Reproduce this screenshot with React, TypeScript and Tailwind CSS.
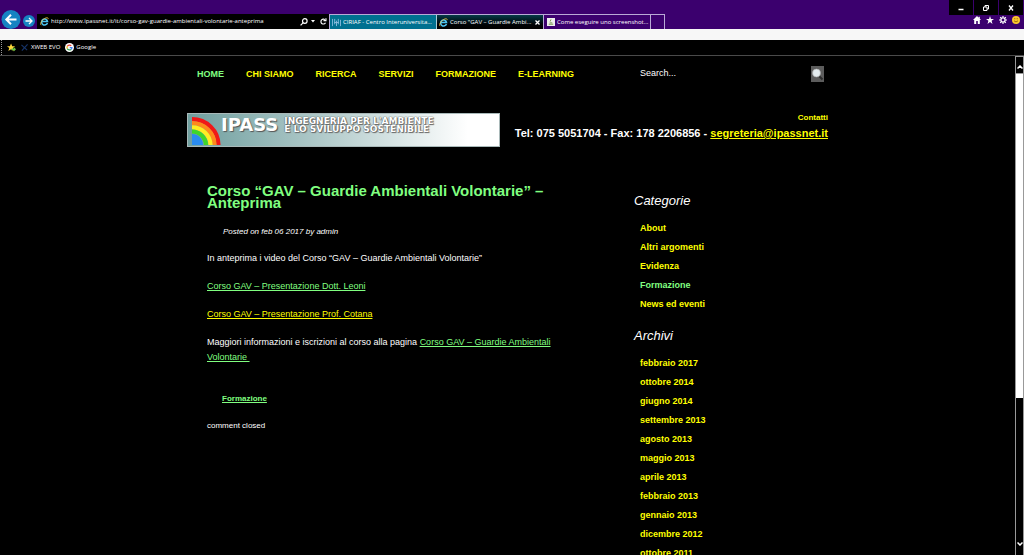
import type { ReactNode } from "react";

const nav = ["HOME", "CHI SIAMO", "RICERCA", "SERVIZI", "FORMAZIONE", "E-LEARNING"];
const categories = ["About", "Altri argomenti", "Evidenza", "Formazione", "News ed eventi"];
const archives = [
  "febbraio 2017",
  "ottobre 2014",
  "giugno 2014",
  "settembre 2013",
  "agosto 2013",
  "maggio 2013",
  "aprile 2013",
  "febbraio 2013",
  "gennaio 2013",
  "dicembre 2012",
  "ottobre 2011",
];

function IeIcon() {
  return (
    <svg viewBox="0 0 16 16" className="size-[9px] shrink-0" aria-hidden="true">
      <path d="M13.2 10.500A5.300 5.300 0 1 1 13.400 8H4" fill="none" stroke="#4cc3f0" strokeWidth="2.800" />
      <path d="M2 14.500C-1 12 4 4 10 1.800c3-1.200 5-.6 4.300 2" fill="none" stroke="#f3c33c" strokeWidth="1.500" />
    </svg>
  );
}

function WindowButton({ label, children }: { label: string; children: ReactNode }) {
  return (
    <button aria-label={label} className="flex h-[15px] w-6 items-center justify-center bg-black">
      <svg viewBox="0 0 8 8" className="size-2" fill="none" stroke="#fff" strokeWidth="1">
        {children}
      </svg>
    </button>
  );
}

function AddressBar() {
  return (
    <div className="flex items-end">
      <button aria-label="Indietro" className="ml-px shrink-0">
        <svg viewBox="0 0 20 20" className="size-5">
          <circle cx="10" cy="10.500" r="9.500" fill="#1683c2" />
          <path d="M15.500 10.500H5.500M10 5.800 5.300 10.500 10 15.200" fill="none" stroke="#fff" strokeWidth="2" />
        </svg>
      </button>
      <button aria-label="Avanti" className="mb-[2px] ml-[2px] shrink-0">
        <svg viewBox="0 0 12 12" className="size-3">
          <circle cx="6" cy="6" r="6" fill="#1683c2" />
          <path d="M2.500 6H9M6 3l3 3-3 3" fill="none" stroke="#fff" strokeWidth="1.300" />
        </svg>
      </button>
      <div className="ml-[2px] flex h-[15px] w-[292px] items-center bg-black pl-[3px]">
        <IeIcon />
        <input
          aria-label="Indirizzo"
          defaultValue="http://www.ipassnet.it/it/corso-gav-guardie-ambientali-volontarie-anteprima"
          className="ml-[2px] min-w-0 flex-1 bg-transparent text-[6px] text-white outline-none"
        />
        <button aria-label="Cerca" className="flex items-center gap-[3px]">
          <svg viewBox="0 0 8 8" className="size-2" fill="none" stroke="#fff" strokeWidth="1.200">
            <circle cx="4.800" cy="3" r="2.300" />
            <path d="M3.200 4.700.6 7.400" />
          </svg>
          <svg viewBox="0 0 4 3" className="h-[3px] w-1" fill="#fff">
            <path d="M0 0h4L2 2.500z" />
          </svg>
        </button>
        <button aria-label="Aggiorna" className="mr-[2px] ml-[5px]">
          <svg viewBox="0 0 8 8" className="size-[7px]" fill="none" stroke="#fff" strokeWidth="1.300">
            <path d="M6.300 5.500A2.800 2.800 0 1 1 5.600 1.900" />
            <path d="M4 3h2.800V.3" />
          </svg>
        </button>
      </div>
    </div>
  );
}

function Tabs() {
  return (
    <div className="flex h-[15px] border-t border-l border-[#b9a9d6] text-[6px] text-white">
      <button className="flex w-[107px] items-center gap-[2px] border-r border-[#a8cbd6] bg-[#007090] pl-[2px]">
        <svg viewBox="0 0 10 10" className="size-[9px]" fill="none" stroke="#8cc0e0">
          <path d="M.5 1v8M2.500 5h5M3 1v6M5 3v6M7 1v6M9.500 2v7" />
        </svg>
        CIRIAF - Centro Interuniversita...
      </button>
      <div className="flex w-[107px] items-center border-r border-[#b9a9d6] bg-linear-to-b from-[#063b49] to-black pl-[2px]">
        <IeIcon />
        <button className="ml-[2px] flex-1 text-left">Corso "GAV – Guardie Ambi...</button>
        <button aria-label="Chiudi scheda" className="mr-[3px]">
          <svg viewBox="0 0 5 5" className="size-[5px]" stroke="#fff" strokeWidth="1.300">
            <path d="m.5.5 4 4m0-4-4 4" />
          </svg>
        </button>
      </div>
      <button className="flex w-[107px] items-center gap-[2px] border-r border-[#b9a9d6] pl-[3px]">
        <svg viewBox="0 0 9 9" className="size-2">
          <path d="M0 0h9v9H0z" fill="#eee" />
          <path d="M2 7h5M3 5.500h3M4.500 1.500 3.500 4" stroke="#6a8f3c" fill="none" />
        </svg>
        Come eseguire uno screenshot...
      </button>
      <button aria-label="Nuova scheda" className="w-[14px] border-r border-[#b9a9d6]" />
    </div>
  );
}

function BrowserChrome() {
  return (
    <header className="shrink-0 font-['Open_Sans',sans-serif]">
      <div className="flex h-[29px] items-end bg-[#3b006e]">
        <AddressBar />
        <Tabs />
        <div className="ml-auto flex flex-col items-end self-start">
          <div className="flex gap-px pr-px">
            <WindowButton label="Riduci">
              <path d="M1.500 5.500h5" strokeWidth="1.500" />
            </WindowButton>
            <WindowButton label="Ripristina">
              <path d="M1.500 3h3.500v3.500H1.500zM3 3V1.500h3.500V5H5" />
            </WindowButton>
            <WindowButton label="Chiudi">
              <path d="m2 1.500 4 5m0-5-4 5" strokeWidth="1.300" />
            </WindowButton>
          </div>
          <div className="mt-px flex gap-[5px] pr-[4px]">
            <button aria-label="Home">
              <svg viewBox="0 0 8 8" className="size-2" fill="#fff">
                <path d="M4 0 0 4h1.200v4h2V5h1.600v3h2V4H8L6.800 2.800V.8H5.600v.9z" />
              </svg>
            </button>
            <button aria-label="Preferiti">
              <svg viewBox="0 0 8 8" className="size-2" fill="#fff">
                <path d="m4 0 1 2.900h3L5.600 4.800 6.500 8 4 6.100 1.500 8l.9-3.200L0 2.900h3z" />
              </svg>
            </button>
            <button aria-label="Strumenti">
              <svg viewBox="0 0 8 8" className="size-2" fill="none" stroke="#fff">
                <circle cx="4" cy="4" r="2.100" strokeWidth="1.300" />
                <path d="M4 0v1.500M4 6.500V8M0 4h1.500M6.500 4H8M1.200 1.200l1 1M5.800 5.800l1 1M1.200 6.800l1-1M5.800 2.200l1-1" strokeWidth="1.200" />
              </svg>
            </button>
            <button aria-label="Commenti">
              <svg viewBox="0 0 8 8" className="size-2">
                <circle cx="4" cy="4" r="4" fill="#fbc62d" />
                <path d="M2.800 2v1.300M5.200 2v1.300M2 4.800q2 2.200 4 0" fill="none" stroke="#8a5a00" strokeWidth=".8" />
              </svg>
            </button>
          </div>
        </div>
      </div>
      <div className="h-[11px] bg-[#f7f7f7]" />
      <div className="flex h-4 items-center border-b border-[#4a4a4a] bg-black pl-px text-[6px] text-white">
        <span className="h-full border-l border-dotted border-[#999]" />
        <svg viewBox="0 0 10 10" className="ml-[5px] size-[9px]">
          <path d="m4.500.5 1.300 3h3.200L6.500 5.600l1 3.200-3-1.900-3 1.900 1-3.200L0 3.500h3.200z" fill="#ffd83a" />
          <path d="M5 6h2.500V4.500L10 7 7.500 9.500V8H5z" fill="#6cc644" />
        </svg>
        <a href="#xweb" className="ml-[5px] flex items-center gap-[3px]">
          <svg viewBox="0 0 8 8" className="size-[7px]" fill="none" stroke="#17356b" strokeWidth="1.300">
            <path d="m.5 1 6.500 6M7.500.5 1 7.500" />
          </svg>
          XWEB EVO
        </a>
        <a href="#google" className="ml-[5px] flex items-center gap-[2px]">
          <svg viewBox="0 0 18 18" className="size-[9px]" fill="none" strokeWidth="2.500">
            <circle cx="9" cy="9" r="9" fill="#fff" />
            <path d="M12.500 5.500A5 5 0 0 0 4.600 6.700" stroke="#ea4335" />
            <path d="M4.600 6.700a5 5 0 0 0 0 4.600" stroke="#fbbc05" />
            <path d="M4.600 11.300a5 5 0 0 0 7.600 1.500" stroke="#34a853" />
            <path d="M12.200 12.800A5 5 0 0 0 14 9H9.500" stroke="#4285f4" />
          </svg>
          Google
        </a>
      </div>
    </header>
  );
}

function Logo() {
  return (
    <a
      href="#home"
      aria-label="IPASS"
      className="flex h-[34px] w-[313px] items-start border border-[#a9b9b9] bg-linear-to-r from-[#6f9f9f] via-[#b4cccc] via-45% to-white to-90% pl-1 font-['DejaVu_Sans',sans-serif] font-bold text-white"
    >
      <svg viewBox="0 0 29 28" className="mt-[3px] h-7 w-[29px] shrink-0" fill="none" strokeWidth="4.200">
        <path d="M0 2.100A26.500 26 0 0 1 26.500 28" stroke="#f01818" />
        <path d="M0 6.200A22.500 22 0 0 1 22.500 28" stroke="#ff8a1c" />
        <path d="M0 10.300A18.500 18 0 0 1 18.500 28" stroke="#ffee22" />
        <path d="M0 14.500A14 14 0 0 1 14 28" stroke="#3fd62a" />
        <path d="M0 28V17a11 11 0 0 1 11 11z" fill="#2a8cf0" stroke="none" />
      </svg>
      <span className="mt-[2px] text-[18px] leading-[18px] [text-shadow:1px_1px_1px_#555]">IPASS</span>
      <span className="mt-[3px] ml-[6px] text-[9px] leading-[8px] whitespace-nowrap [text-shadow:0_0_1px_#555,1px_1px_1px_#666,0_0_1px_#555]">
        INGEGNERIA PER L'AMBIENTE
        <br />E LO SVILUPPO SOSTENIBILE
      </span>
    </a>
  );
}

function LinkList({ title, items }: { title: string; items: string[] }) {
  return (
    <section>
      <h2 className="text-[13px] leading-4 text-white italic">{title}</h2>
      <ul className="mt-[10px] pl-[6px] text-[9px] leading-[19px] font-bold">
        {items.map((item) => (
          <li key={item}>
            <a href="#archivio" className={item === "Formazione" ? "text-[#80ff80]" : "text-[#ffff00]"}>
              {item}
            </a>
          </li>
        ))}
      </ul>
    </section>
  );
}

function Scrollbar() {
  return (
    <div className="flex w-[9px] shrink-0 flex-col border-x border-[#999] bg-white">
      <div className="flex h-[18px] items-center justify-center border-y border-[#999] bg-black">
        <svg viewBox="0 0 6 4" className="mt-[4px] h-1 w-[6px]" fill="none" stroke="#fff" strokeWidth="1.500">
          <path d="m.5 3.500 2.500-2.500 2.500 2.500" />
        </svg>
      </div>
      <div className="basis-[65%]" />
      <div className="flex flex-1 items-end justify-center bg-black pb-[9px]">
        <svg viewBox="0 0 6 4" className="h-1 w-[6px]" fill="none" stroke="#fff" strokeWidth="1.500">
          <path d="m.5.5 2.500 2.500L5.500.5" />
        </svg>
      </div>
    </div>
  );
}

export default function App() {
  return (
    <div className="flex h-screen flex-col overflow-hidden bg-black">
      <BrowserChrome />
      <div className="flex min-h-0 flex-1">
        <div className="min-w-0 flex-1 overflow-hidden font-['Liberation_Sans',Arial,sans-serif] text-white">
          <div className="mx-auto max-w-[641px]">
            <div className="flex items-center pt-[9px] pl-[10px]">
              <nav className="flex gap-[22px] text-[9px] leading-[18px] font-bold">
                {nav.map((item) => (
                  <a key={item} href="#menu" className={item === "HOME" ? "text-[#80ff80]" : "text-[#ffff00]"}>
                    {item}
                  </a>
                ))}
              </nav>
              <form className="mr-1 ml-auto flex w-[184px] items-center">
                <input
                  aria-label="Search"
                  placeholder="Search..."
                  className="min-w-0 flex-1 bg-transparent text-[9px] text-white outline-none placeholder:text-white"
                />
                <button type="button" aria-label="Cerca nel sito" className="h-4 w-[13px] bg-[#5c5c5c]">
                  <svg viewBox="0 0 13 16" className="h-4 w-[13px]">
                    <path d="m7.500 9.500 4 4" stroke="#2c2c2c" strokeWidth="2" />
                    <circle cx="5.500" cy="7" r="4" fill="#e4ecef" stroke="#aaa" strokeWidth=".6" />
                  </svg>
                </button>
              </form>
            </div>

            <div className="mt-[30px] flex justify-between">
              <Logo />
              <div className="text-right font-bold">
                <a href="#contatti" className="block text-[8px] leading-[10px] text-[#ffff00]">
                  Contatti
                </a>
                <p className="mt-[3px] text-[11px] leading-[14px] whitespace-nowrap">
                  Tel: 075 5051704 - Fax: 178 2206856 -{" "}
                  <a href="mailto:segreteria@ipassnet.it" className="text-[#ffff00] underline">
                    segreteria@ipassnet.it
                  </a>
                </p>
              </div>
            </div>

            <div className="mt-9 flex justify-between pl-5">
              <main className="w-[365px] text-[9px] leading-[15px]">
                <h1 className="pt-[2px] text-[15px] leading-3 font-bold text-[#80ff80]">
                  Corso “GAV – Guardie Ambientali Volontarie” – Anteprima
                </h1>
                <p className="mt-4 pl-4 text-[8px] leading-[14px] italic">Posted on feb 06 2017 by admin</p>
                <p className="mt-3">In anteprima i video del Corso “GAV – Guardie Ambientali Volontarie”</p>
                <p className="mt-[13px]">
                  <a href="#leoni" className="text-[#80ff80] underline">
                    Corso GAV – Presentazione Dott. Leoni
                  </a>
                </p>
                <p className="mt-[13px]">
                  <a href="#cotana" className="text-[#ffff00] underline">
                    Corso GAV – Presentazione Prof. Cotana
                  </a>
                </p>
                <p className="mt-[13px]">
                  Maggiori informazioni e iscrizioni al corso alla pagina{" "}
                  <a href="#corso" className="text-[#80ff80] underline">
                    Corso GAV – Guardie Ambientali Volontarie&nbsp;
                  </a>
                </p>
                <p className="mt-[26px] pl-[15px] text-[8px] font-bold">
                  <a href="#formazione" className="text-[#80ff80] underline">
                    Formazione
                  </a>
                </p>
                <p className="mt-3 text-[8px]">comment closed</p>
              </main>
              <aside className="flex w-[194px] flex-col gap-[14px] pt-[10px]">
                <LinkList title="Categorie" items={categories} />
                <LinkList title="Archivi" items={archives} />
              </aside>
            </div>
          </div>
        </div>
        <Scrollbar />
      </div>
    </div>
  );
}
